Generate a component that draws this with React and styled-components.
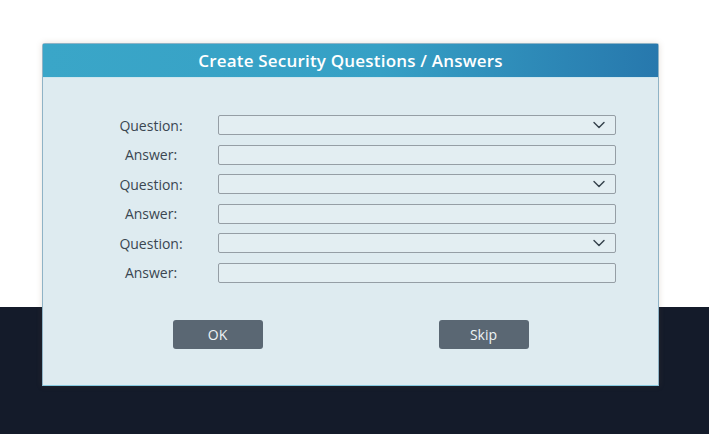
import { Fragment } from "react";
import styled, { createGlobalStyle } from "styled-components";
import { ChevronDown } from "lucide-react";

const GlobalStyle = createGlobalStyle`
  html, body {
    margin: 0;
    padding: 0;
  }
  body {
    font-family: "Open Sans", "Liberation Sans", sans-serif;
  }
`;

const Page = styled.div`
  min-height: 434px;
  padding-top: 43px;
  box-sizing: border-box;
  background: linear-gradient(180deg, #ffffff 0px, #ffffff 307px, #141b2a 307px, #141b2a 100%);
`;

const Dialog = styled.div`
  margin-left: 42px;
  width: 617px;
  height: 343px;
  box-sizing: border-box;
  background: #deebf0;
  border: 1px solid #8fb3c6;
  border-bottom-color: #86c9df;
  border-radius: 3px 3px 0 0;
  box-shadow: 0 0 6px rgba(120, 90, 60, 0.18);
  display: flex;
  flex-direction: column;
`;

const Header = styled.div`
  height: 33px;
  display: flex;
  align-items: center;
  justify-content: center;
  background: linear-gradient(90deg, #3aa6c8 0%, #36a0c5 55%, #2778ad 100%);
  border-bottom: 1px solid #cfe6ee;
  color: #ffffff;
  font-size: 17px;
  font-weight: 600;
  letter-spacing: 0.2px;
`;

const Form = styled.div`
  display: grid;
  grid-template-columns: 66px 398px;
  column-gap: 34px;
  row-gap: 9.5px;
  padding: 37px 0 0 75px;
  align-items: center;
`;

const Label = styled.div`
  text-align: center;
  white-space: nowrap;
  color: #3a4651;
  font-size: 14px;
`;

const Field = styled.div`
  height: 20px;
  box-sizing: border-box;
  border: 1px solid #959ea5;
  border-radius: 2px;
  background: #e3eef2;
  display: flex;
  align-items: center;
  justify-content: flex-end;
  padding-right: 6px;
  color: #36424d;
`;

const Buttons = styled.div`
  margin-top: auto;
  margin-bottom: 36px;
  display: flex;
  justify-content: center;
  gap: 176px;
`;

const Button = styled.button`
  width: 90px;
  height: 29px;
  border: none;
  border-radius: 3px;
  background: #5a6773;
  color: #eef3f5;
  font-family: "Open Sans", "Liberation Sans", sans-serif;
  font-size: 14px;
  font-weight: 500;
  padding: 0;
  cursor: pointer;
`;

const rows = [1, 2, 3];

export default function App() {
  return (
    <Page>
      <GlobalStyle />
      <Dialog>
        <Header>Create Security Questions / Answers</Header>
        <Form>
          {rows.map((n) => (
            <Fragment key={n}>
              <Label>Question:</Label>
              <Field>
                <ChevronDown size={20} strokeWidth={1.7} />
              </Field>
              <Label>Answer:</Label>
              <Field />
            </Fragment>
          ))}
        </Form>
        <Buttons>
          <Button>OK</Button>
          <Button>Skip</Button>
        </Buttons>
      </Dialog>
    </Page>
  );
}
